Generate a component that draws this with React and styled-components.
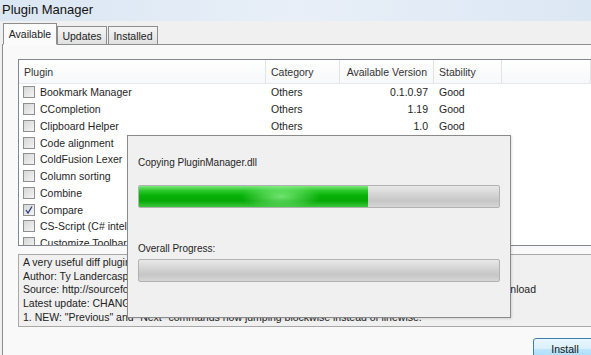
import React from 'react'
import styled, { createGlobalStyle } from 'styled-components'

const Global = createGlobalStyle`
  *, *::before, *::after { box-sizing: border-box; }
  html, body { margin: 0; padding: 0; }
  body {
    width: 591px;
    height: 355px;
    overflow: hidden;
    background: #f0f0f0;
    font-family: "Liberation Sans", Arial, sans-serif;
    font-size: 10.5px;
    color: #1e1e1e;
  }
`;

const Window = styled.div`
  display: flex;
  flex-direction: column;
  width: 591px;
  height: 355px;
  overflow: hidden;
`;

const TitleBar = styled.div`
  flex: none;
  height: 21px;
  padding: 0 0 3px 2px;
  display: flex;
  align-items: center;
  font-size: 13px;
  color: #111;
  background: linear-gradient(90deg, #dae6f3 0%, #e8eff8 50%, #dce7f4 100%);
`;

const TabStrip = styled.div`
  flex: none;
  height: 23px;
  display: flex;
  align-items: flex-end;
  padding-left: 3px;
  background: #f0f0f0;
`;

const Tab = styled.div`
  height: ${p => (p.active ? '22px' : '19px')};
  width: ${p => p.w}px;
  display: flex;
  align-items: center;
  justify-content: center;
  border: 1px solid #8d8d8d;
  border-bottom: ${p => (p.active ? '1px solid #fbfbfb' : '1px solid #8d8d8d')};
  margin-bottom: -1px;
  margin-right: ${p => p.mr}px;
  padding-top: ${p => (p.active ? '0' : '1px')};
  background: ${p => (p.active ? '#fbfbfb' : 'linear-gradient(#f5f5f5, #e0e0e0)')};
  position: relative;
  z-index: ${p => (p.active ? 2 : 1)};
  color: #222;
`;

const TabPanel = styled.div`
  flex: 1;
  min-height: 0;
  position: relative;
  margin-left: 2px;
  border-left: 1px solid #8d8d8d;
  border-top: 1px solid #8d8d8d;
  background: #f9f9f9;
  padding: 14px 0 0 15px;
  display: flex;
  flex-direction: column;
`;

const ListView = styled.div`
  flex: none;
  height: 187px;
  border: 1px solid #828790;
  border-right: none;
  background: #fff;
  overflow: hidden;
`;

const cols = '247px 74px 94px 68px 1fr';

const HeaderRow = styled.div`
  display: grid;
  grid-template-columns: ${cols};
  height: 24px;
  background: linear-gradient(#ffffff, #f7f8fa);
  border-bottom: 1px solid #e6e8eb;
`;

const HeaderCell = styled.div`
  display: flex;
  align-items: center;
  justify-content: ${p => (p.right ? 'flex-end' : 'flex-start')};
  padding: 0 ${p => (p.right ? '6px' : '0')} 0 5px;
  border-right: 1px solid #e3e3e3;
  color: #333;
  white-space: nowrap;
`;

const Row = styled.div`
  display: grid;
  grid-template-columns: ${cols};
  height: 16.75px;
  align-items: center;
`;

const Cell = styled.div`
  display: flex;
  align-items: center;
  justify-content: ${p => (p.right ? 'flex-end' : 'flex-start')};
  padding: 0 ${p => (p.right ? '6px' : '5px')} 0 ${p => (p.first ? '4px' : '5px')};
  white-space: nowrap;
  overflow: hidden;
`;

const Check = styled.span`
  width: 12px;
  height: 12px;
  border: 1px solid #8f8f8f;
  background: linear-gradient(135deg, #d6d6d6, #f4f4f4);
  margin-right: 5px;
  flex: none;
  display: flex;
  align-items: center;
  justify-content: center;
`;

const DescBox = styled.div`
  flex: none;
  margin-top: 8px;
  height: 73px;
  border: 1px solid #a8a8a8;
  border-right: none;
  background: #f0f0f0;
  padding: 1px 4px;
  line-height: 13.7px;
  white-space: nowrap;
  overflow: hidden;
  color: #222;
`;

const Footer = styled.div`
  flex: none;
  display: flex;
  justify-content: flex-end;
  padding-top: 11px;
`;

const Button = styled.div`
  width: 64px;
  height: 22px;
  margin-right: -6px;
  border: 1px solid #3c7fb1;
  border-radius: 3px;
  background: linear-gradient(#eaf6fd 0%, #d9f0fc 50%, #bee6fd 51%, #a7d9f5 100%);
  display: flex;
  align-items: center;
  justify-content: center;
  color: #111;
`;

const Dialog = styled.div`
  position: absolute;
  left: 124px;
  top: 90px;
  width: 384px;
  height: 183px;
  padding: 19px 10px 0 10px;
  background: #f0f0f0;
  border: 1px solid #8a8a8a;
  box-shadow: 1px 1px 2px rgba(0, 0, 0, 0.12);
  z-index: 5;
  font-size: 10px;
`;

const DialogLabel = styled.div`
  height: 14px;
  display: flex;
  align-items: center;
  margin-bottom: ${p => p.gap}px;
`;

const Bar = styled.div`
  height: 23px;
  border: 1px solid #b2b2b2;
  border-radius: 2px;
  background: linear-gradient(#e8e8e8, #d2d2d2 45%, #c6c6c6 70%, #d6d6d6);
  overflow: hidden;
  margin-bottom: ${p => p.gap}px;
`;

const Fill = styled.div`
  height: 100%;
  background:
    radial-gradient(ellipse 40px 13px at 62% 50%, rgba(170, 255, 170, 0.65), rgba(170, 255, 170, 0) 100%),
    linear-gradient(#7ee87e 0%, #2cc82c 22%, #08b208 45%, #06a806 70%, #3cc63c 100%);
`;

const plugins = [
  ['Bookmark Manager', 'Others', '0.1.0.97', 'Good'],
  ['CCompletion', 'Others', '1.19', 'Good'],
  ['Clipboard Helper', 'Others', '1.0', 'Good'],
  ['Code alignment', '', '', ''],
  ['ColdFusion Lexer', '', '', ''],
  ['Column sorting', '', '', ''],
  ['Combine', '', '', ''],
  ['Compare', '', '', '', true],
  ['CS-Script (C# intellisense)', '', '', ''],
  ['Customize Toolbar', '', '', ''],
];

function App() {
  return (
    <Window>
      <Global />
      <TitleBar>Plugin Manager</TitleBar>
      <TabStrip>
        <Tab active w={54} mr={0}>Available</Tab>
        <Tab w={50} mr={1}>Updates</Tab>
        <Tab w={50} mr={0}>Installed</Tab>
      </TabStrip>
      <TabPanel>
        <ListView>
          <HeaderRow>
            <HeaderCell>Plugin</HeaderCell>
            <HeaderCell>Category</HeaderCell>
            <HeaderCell right>Available Version</HeaderCell>
            <HeaderCell>Stability</HeaderCell>
            <HeaderCell />
          </HeaderRow>
          {plugins.map(p => (
            <Row key={p[0]}>
              <Cell first>
                <Check>
                  {p[4] && (
                    <svg width="10" height="10" viewBox="0 0 10 10">
                      <path d="M2 5 L4 8 L8 1.5" fill="none" stroke="#2a3f7a" strokeWidth="1.3" />
                    </svg>
                  )}
                </Check>
                {p[0]}
              </Cell>
              <Cell>{p[1]}</Cell>
              <Cell right>{p[2]}</Cell>
              <Cell>{p[3]}</Cell>
              <Cell />
            </Row>
          ))}
        </ListView>
        <DescBox>
          <div>A very useful diff plugin to show the difference between 2 files (side by side).</div>
          <div>Author: Ty Landercasper, Jean-Sebastien Leroy</div>
          <div>Source: http://sourceforge.net/projects/npp-plugins/files/ComparePlugin/Compare_1.5.5_UNI_01.zip/download</div>
          <div>Latest update: CHANGES in 1.5.5:</div>
          <div>1. NEW: "Previous" and "Next" commands now jumping blockwise instead of linewise.</div>
        </DescBox>
        <Footer>
          <Button>Install</Button>
        </Footer>
        <Dialog>
          <DialogLabel gap={16}>Copying PluginManager.dll</DialogLabel>
          <Bar gap={33}>
            <Fill style={{ width: `${(230 / 362) * 100}%` }} />
          </Bar>
          <DialogLabel gap={4}>Overall Progress:</DialogLabel>
          <Bar gap={0} />
        </Dialog>
      </TabPanel>
    </Window>
  )
}

export default App;
